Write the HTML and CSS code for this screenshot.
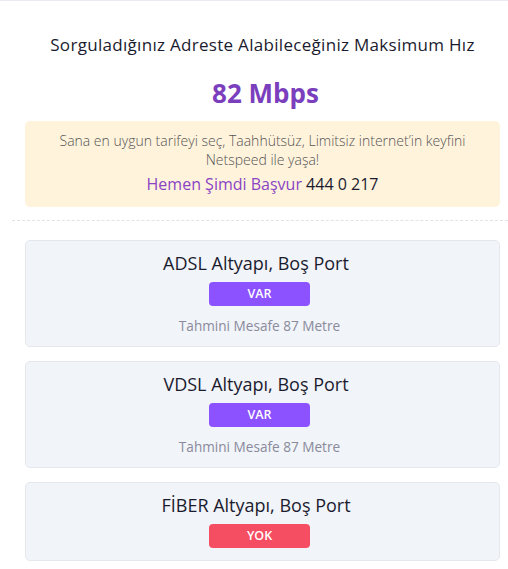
FILE: index.html
```html
<!DOCTYPE html>
<html lang="tr">
<head>
<meta charset="utf-8">
<title>Altyapı Sorgulama</title>
<link rel="stylesheet" href="styles.css">
</head>
<body>
<div class="page">
  <div class="content">
    <h1 class="title">Sorguladığınız Adreste Alabileceğiniz Maksimum Hız</h1>
    <div class="speed">82 Mbps</div>
    <div class="promo">
      <p class="promo-text">Sana en uygun tarifeyi seç, Taahhütsüz, Limitsiz internet’in keyfini<br>Netspeed ile yaşa!</p>
      <p class="promo-cta"><span class="cta-link">Hemen Şimdi Başvur</span> <span class="cta-phone">444 0 217</span></p>
    </div>
  </div>
  <div class="divider"></div>
  <div class="content cards">
    <div class="card">
      <h2 class="card-title">ADSL Altyapı, Boş Port</h2>
      <span class="badge badge-yes">VAR</span>
      <p class="distance">Tahmini Mesafe 87 Metre</p>
    </div>
    <div class="card">
      <h2 class="card-title">VDSL Altyapı, Boş Port</h2>
      <span class="badge badge-yes">VAR</span>
      <p class="distance">Tahmini Mesafe 87 Metre</p>
    </div>
    <div class="card">
      <h2 class="card-title">FİBER Altyapı, Boş Port</h2>
      <span class="badge badge-no">YOK</span>
    </div>
  </div>
</div>
</body>
</html>
```
FILE: styles.css
```css
* { box-sizing: border-box; }
html, body { margin: 0; padding: 0; background: #fff; }
body {
  font-family: "Open Sans", "Noto Sans", sans-serif;
  color: #1b1b2f;
  border-top: 1px solid #ebebf3;
  overflow: hidden;
}
.page {
  padding: 0 8px 0 12px;
}
.content {
  padding-left: 13px;
  display: flex;
  flex-direction: column;
  align-items: stretch;
  text-align: center;
}
.title {
  margin: 32px 0 0;
  font-size: 17px;
  line-height: 24px;
  letter-spacing: 0.3px;
  font-weight: 400;
  color: #1b1b2f;
}
.speed {
  margin: 18px 0 0 6px;
  font-size: 26px;
  line-height: 36px;
  font-weight: 700;
  color: #7b3fbe;
}
.promo {
  margin-top: 10px;
  background: #fff3dc;
  border-radius: 5px;
  padding: 10px 10px 11px;
}
.promo-text {
  margin: 0;
  font-size: 14px;
  line-height: 19px;
  font-weight: 300;
  color: #555;
}
.promo-cta {
  margin: 3px 0 0;
  font-size: 16px;
  line-height: 24px;
}
.cta-link { color: #8a44c4; }
.cta-phone { color: #1b1b2f; font-size: 16px; font-weight: 500; }
.divider {
  margin: 13px -8px 0 0;
  border-top: 1px dashed #e2e2e8;
}
.cards {
  margin-top: 19px;
  gap: 14px;
}
.card {
  background: #f1f4f8;
  border: 1px solid #e4e7ed;
  border-radius: 5px;
  padding: 9px 0 10px;
  display: flex;
  flex-direction: column;
  align-items: center;
}
.card-title {
  margin: 0 13px 0 0;
  font-size: 18px;
  line-height: 27px;
  font-weight: 400;
  color: #1b1b2f;
}
.badge {
  margin: 5px 6px 2px 0;
  width: 101px;
  height: 24px;
  border-radius: 4px;
  color: #fff;
  font-size: 12.5px;
  font-weight: 600;
  line-height: 24px;
  text-align: center;
}
.badge-yes { background: #8c52ff; }
.badge-no { background: #f54d62; }
.distance {
  margin: 8px 6px 0 0;
  font-size: 13.6px;
  line-height: 20px;
  color: #8a8a9c;
}
```
